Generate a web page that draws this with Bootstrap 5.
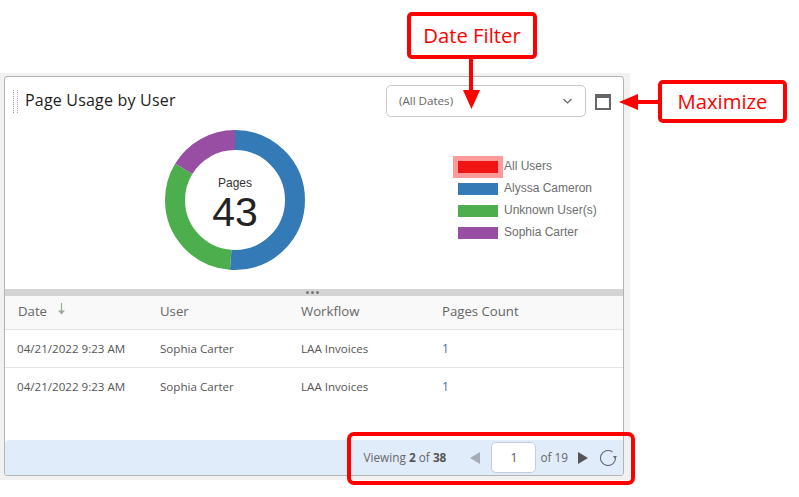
<!DOCTYPE html>
<html lang="en">
<head>
  <meta charset="UTF-8" />
  <title>Page Usage by User</title>
  <link href="https://cdn.jsdelivr.net/npm/bootstrap@5.3.3/dist/css/bootstrap.min.css" rel="stylesheet" />
  <style>
    html, body { background: #fff; overflow: hidden; }
    body { font-family: "Open Sans", sans-serif; color: #555; height: 497px; }
    .shot { width: 799px; height: 497px; padding-top: 73px; }
    .frame { width: 630px; height: 407px; background: #f0f1f0; padding: 3px 6px 4px 4px; }
    .panel { height: 400px; background: #fff; border: 1px solid #b4b4b4; border-radius: 3px; }
    .panel-top { height: 212px; }
    .title-row { height: 46px; padding: 8px 12px 0 8px; }
    .grip { width: 5px; height: 23px; margin-top: 5px; border-left: 1px dotted #999; border-right: 1px dotted #b9a; margin-right: 7px; }
    .panel-title { font-size: 16px; font-weight: 500; color: #1c1c1c; letter-spacing: .2px; margin: 4px 0 0; line-height: 23px; }
    .date-select { width: 200px; height: 32px; border: 1px solid #c5c9d0; border-radius: 5px; padding: 0 13px 0 12px; font-size: 11.6px; color: #666; }
    .max-icon { width: 16px; height: 16px; border: 2px solid #666; border-top-width: 4px; margin-left: 9px; margin-top: 9px; }
    .chart-row { height: 166px; }
    .donut-box { width: 140px; height: 140px; margin: 7px 0 0 160px; }
    .donut-label { top: 0; left: 0; width: 140px; font-family: "Liberation Sans", sans-serif; color: #222; padding-top: 47px; line-height: 1.12; }
    .donut-label .cap { font-size: 12px; color: #333; }
    .donut-label .num { font-size: 41px; }
    .legend-box { margin: 32px 0 0 153px; font-family: "Liberation Sans", sans-serif; font-size: 12px; color: #6e6e6e; }
    .legend-row { height: 22px; }
    .swatch { width: 40px; height: 12px; margin: 2px 6px 0 0; }
    .swatch-on { box-shadow: 0 0 0 5px #ff9a9a; }
    .splitter { height: 7px; background: #d4d4d4; }
    .splitter i { width: 3px; height: 3px; border-radius: 50%; background: #777; }
    .splitter-dots { height: 7px; gap: 2px; padding-right: 3px; }
    .grid-table { table-layout: fixed; width: 100%; margin: 0; font-size: 11.6px; }
    .grid-table th { height: 33px; background: #f9f9f9; font-weight: 400; font-size: 13.2px; color: #666; padding: 0 0 1px 13px; vertical-align: middle; border-bottom: 1px solid #e4e4e4; }
    .grid-table td { height: 38px; padding: 2px 0 0 13px; line-height: 18px; color: #555; vertical-align: middle; border-bottom: 1px solid #e4e4e4; }
    .grid-table td:first-child { padding-left: 12px; }
    .grid-table tbody tr:last-child td { border-bottom: 0; }
    .grid-table .col-first { width: 142px; }
    .grid-table .col-mid { width: 141px; }
    .count-link { color: #3f6ea5; text-decoration: none; font-size: 12px; }
    .sort-arrow { margin-left: 7px; vertical-align: 1px; }
    .panel-foot { height: 35px; margin-top: auto; background: #e1ecfb; border-radius: 4px 0 0 3px; font-size: 11.8px; color: #666; padding-right: 6px; }
    .panel-foot b { color: #555; font-weight: 700; }
    .page-input { width: 45px; height: 31px; background: #fff; border: 1px solid #c5cdd8; border-radius: 5px; font-size: 12px; color: #556; margin: 0 4px 0 11px; }
    .prev-arrow { margin-left: 24px; }
    .next-arrow { margin-left: 10px; }
    .reload { margin-left: 12px; }
    .note-box { border: 4px solid #f00; border-radius: 5px; background: #fff; color: #f00; font-size: 20.3px; font-family: "Open Sans", sans-serif; }
    .note-date { left: 407px; top: 12px; width: 130px; height: 47px; }
    .note-max { left: 658px; top: 80px; width: 129px; height: 43px; }
    .note-layer { left: 0; top: 0; pointer-events: none; }
  </style>
</head>
<body class="m-0">
  <div class="shot position-relative">
    <div class="frame">
      <div class="panel d-flex flex-column overflow-hidden">
        <div class="panel-top">
          <div class="title-row d-flex align-items-start">
            <span class="grip"></span>
            <h5 class="panel-title flex-grow-1">Page Usage by User</h5>
            <div class="date-select d-flex align-items-center justify-content-between">
              <span>(All Dates)</span>
              <svg width="9" height="6" viewBox="0 0 9 6"><path d="M.5 1l4 4 4-4" fill="none" stroke="#666" stroke-width="1.2"/></svg>
            </div>
            <span class="max-icon"></span>
          </div>
          <div class="chart-row d-flex align-items-start">
            <div class="donut-box position-relative">
              <svg width="140" height="140" viewBox="0 0 140 140">
                <g fill="none" stroke-width="20" transform="rotate(-90 70 70)">
                  <circle cx="70" cy="70" r="60" pathLength="43" stroke="#337ab7" stroke-dasharray="22 21"/>
                  <circle cx="70" cy="70" r="60" pathLength="43" stroke="#4cae4c" stroke-dasharray="14 29" stroke-dashoffset="-22"/>
                  <circle cx="70" cy="70" r="60" pathLength="43" stroke="#984ea3" stroke-dasharray="7 36" stroke-dashoffset="-36"/>
                </g>
              </svg>
              <div class="donut-label position-absolute text-center">
                <div class="cap">Pages</div>
                <div class="num">43</div>
              </div>
            </div>
            <div class="legend-box">
              <div class="legend-row d-flex align-items-center"><span class="swatch swatch-on" style="background:#f01414"></span>All Users</div>
              <div class="legend-row d-flex align-items-center"><span class="swatch" style="background:#337ab7"></span>Alyssa Cameron</div>
              <div class="legend-row d-flex align-items-center"><span class="swatch" style="background:#4cae4c"></span>Unknown User(s)</div>
              <div class="legend-row d-flex align-items-center"><span class="swatch" style="background:#984ea3"></span>Sophia Carter</div>
            </div>
          </div>
        </div>
        <div class="splitter">
          <div class="splitter-dots d-flex justify-content-center align-items-center"><i></i><i></i><i></i></div>
        </div>
        <table class="grid-table">
          <thead>
            <tr>
              <th class="col-first">Date
                <svg class="sort-arrow" width="9" height="12" viewBox="0 0 9 12"><path d="M4.5 0v9" fill="none" stroke="#9aa89a" stroke-width="1.2"/><path d="M1 7.5h7L4.5 11.5z" fill="#9aa89a"/></svg>
              </th>
              <th class="col-mid">User</th>
              <th class="col-mid">Workflow</th>
              <th>Pages Count</th>
            </tr>
          </thead>
          <tbody>
            <tr><td>04/21/2022 9:23 AM</td><td>Sophia Carter</td><td>LAA Invoices</td><td><a class="count-link" href="#">1</a></td></tr>
            <tr><td>04/21/2022 9:23 AM</td><td>Sophia Carter</td><td>LAA Invoices</td><td><a class="count-link" href="#">1</a></td></tr>
          </tbody>
        </table>
        <div class="panel-foot d-flex align-items-center justify-content-end flex-shrink-0">
          <span>Viewing <b>2</b> of <b>38</b></span>
          <svg class="prev-arrow" width="10" height="12" viewBox="0 0 10 12"><path d="M10 0v12L0 6z" fill="#a4acb4"/></svg>
          <div class="page-input d-flex align-items-center justify-content-center">1</div>
          <span>of 19</span>
          <svg class="next-arrow" width="10" height="12" viewBox="0 0 10 12"><path d="M0 0v12l10-6z" fill="#555"/></svg>
          <svg class="reload" width="17" height="16" viewBox="0 0 17 16"><path d="M15.5 7.5a7.5 7.5 0 1 1-3-5.5" fill="none" stroke="#667" stroke-width="1.1"/><path d="M13 6h4l-2 3z" fill="#667"/></svg>
        </div>
      </div>
    </div>

    <svg class="note-layer position-absolute" width="799" height="497" viewBox="0 0 799 497">
      <rect x="349" y="434" width="284" height="49" rx="5" fill="none" stroke="#f00" stroke-width="4"/>
      <path d="M471 58v33" stroke="#f00" stroke-width="4"/>
      <path d="M463 90h17l-8.5 19z" fill="#f00"/>
      <path d="M636 102h23" stroke="#f00" stroke-width="4"/>
      <path d="M638 94v16l-19-8z" fill="#f00"/>
    </svg>
    <div class="note-box note-date position-absolute d-flex align-items-center justify-content-center">Date Filter</div>
    <div class="note-box note-max position-absolute d-flex align-items-center justify-content-center">Maximize</div>
  </div>
  <script src="https://cdn.jsdelivr.net/npm/bootstrap@5.3.3/dist/js/bootstrap.bundle.min.js"></script>
</body>
</html>
